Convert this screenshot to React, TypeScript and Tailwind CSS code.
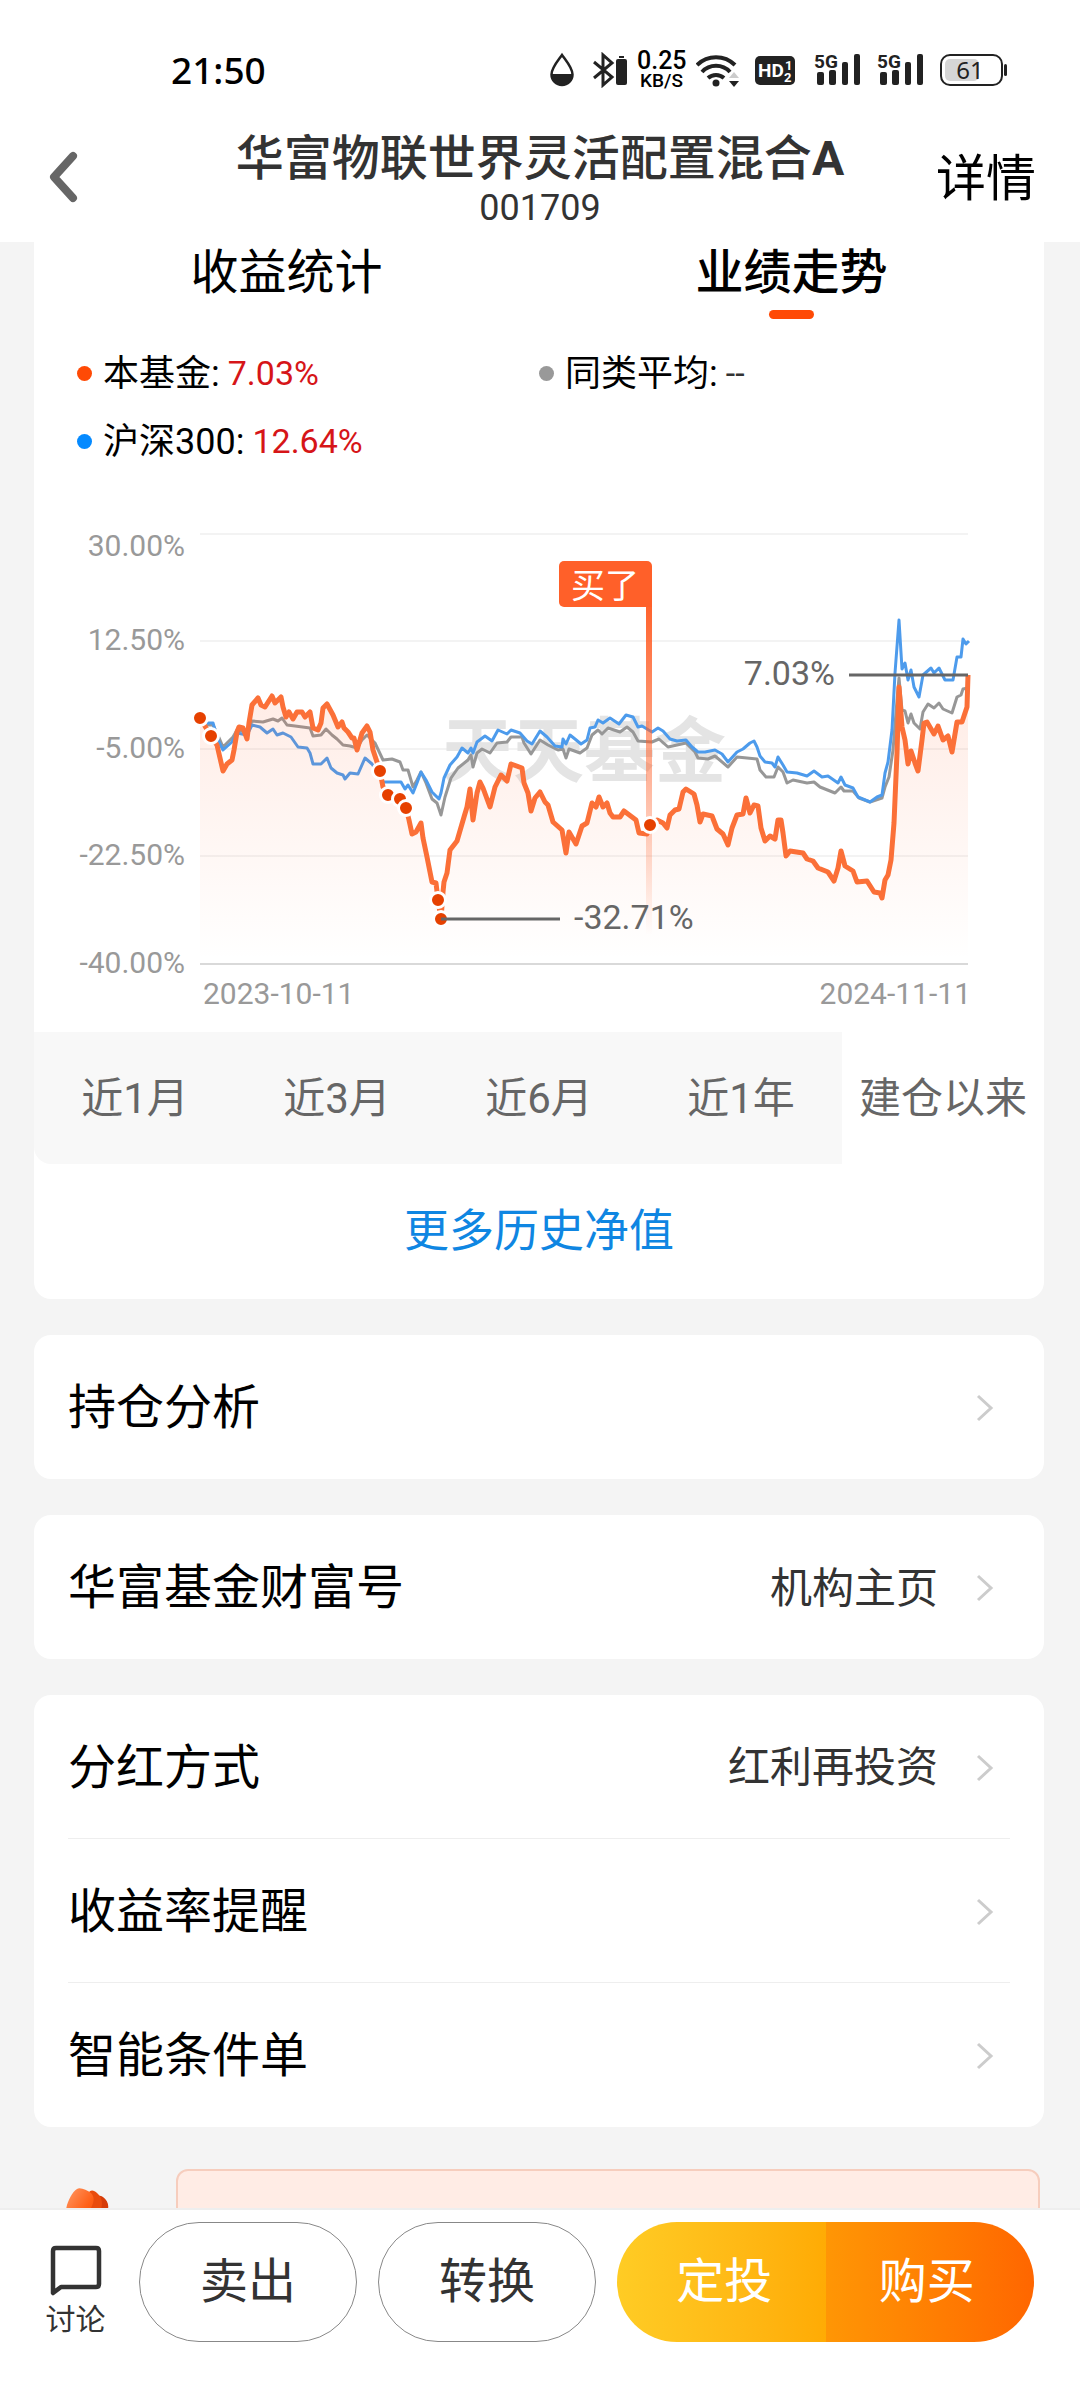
import { useState } from "react";

const fundLine =
  "200,718 211,736 217,745 223,771 227,764 232,760 234,750 237,732 239,727 243,728 247,739 249,723 252,705 258,698 261,705 265,707 272,696 275,703 281,697 283,707 286,717 289,712 293,719 297,712 302,712 305,717 310,712 313,728 318,730 321,723 323,708 327,704 333,715 338,727 342,722 344,728 348,732 352,738 354,738 357,750 362,733 367,726 370,732 373,750 380,771 383,787 388,795 400,799 406,808 409,820 412,834 416,832 421,823 423,838 427,857 432,882 436,883 438,900 441,919 443,892 444,882 447,873 450,850 457,841 464,817 467,807 470,789 473,820 477,793 480,782 483,788 490,807 495,787 501,775 507,781 511,764 522,768 524,783 528,793 531,811 535,798 540,792 545,802 548,805 553,822 562,830 566,853 569,832 576,844 582,826 587,823 592,803 596,807 599,797 603,807 607,803 610,813 613,817 620,817 624,811 632,817 636,820 639,833 647,834 650,825 657,820 663,823 667,828 670,815 675,810 679,809 683,792 686,789 694,794 697,805 700,822 703,814 712,816 717,829 723,834 728,845 732,828 737,815 743,814 746,798 750,813 754,805 758,806 761,828 765,841 770,836 775,839 778,820 781,820 783,833 786,856 790,851 803,853 807,859 813,861 818,868 828,872 834,881 838,868 841,851 845,866 853,871 857,882 867,881 874,892 880,893 882,898 885,880 888,875 891,860 894,823 897,753 899,687 902,727 905,740 908,764 911,751 915,763 918,771 922,740 924,723 927,722 934,734 938,726 943,740 948,736 952,752 957,722 962,722 967,707 968,675";

const indexLine =
  "200,718 206,723 213,723 218,740 223,750 232,742 237,733 247,735 252,725 260,727 267,733 273,729 277,735 283,733 291,737 298,747 307,748 310,753 313,764 321,764 327,758 331,768 337,773 343,775 345,779 350,773 358,774 365,758 372,764 378,773 383,782 401,782 405,789 408,785 413,793 417,783 421,772 426,780 432,792 439,799 441,793 444,778 450,765 457,757 462,748 468,753 471,748 473,753 477,742 485,736 492,741 498,730 507,734 511,730 520,733 527,741 532,744 540,731 547,737 555,746 562,747 563,739 566,744 570,735 575,739 581,744 587,740 590,728 595,727 598,720 603,723 610,718 619,724 626,715 633,717 638,727 642,726 652,732 658,728 663,731 670,739 677,741 686,740 692,747 698,752 705,752 715,750 722,754 728,762 737,752 743,749 750,743 754,741 757,747 760,756 765,762 772,763 775,767 778,757 783,765 787,772 797,773 807,776 814,771 822,777 828,776 838,783 841,777 845,785 853,788 858,797 870,802 877,797 882,795 885,773 888,762 892,730 895,673 899,620 902,669 905,663 908,680 911,670 914,687 919,697 923,675 931,668 934,673 939,668 945,680 953,680 957,657 961,657 963,639 966,644 969,641";

const averageLine =
  "200,718 206,725 213,725 220,740 223,747 228,742 233,737 237,730 247,732 252,721 263,722 273,719 278,721 282,718 287,725 295,726 310,728 313,736 321,735 326,729 332,735 337,739 343,745 350,746 357,748 362,740 367,735 375,743 383,760 392,759 400,762 403,770 408,770 413,787 417,780 421,772 426,783 432,799 437,803 441,815 445,797 451,778 458,768 468,760 471,755 473,767 477,753 482,749 490,753 497,743 507,742 511,737 522,737 524,743 531,754 540,740 548,745 558,750 563,749 566,758 569,749 580,753 587,748 592,735 598,730 602,734 608,728 620,732 627,727 633,732 638,741 652,742 659,739 668,747 686,743 695,752 698,758 708,759 715,756 728,767 737,757 757,759 760,770 766,777 774,777 778,767 783,772 787,783 793,780 807,783 814,782 820,787 835,793 841,787 844,791 853,791 859,798 870,802 882,798 885,787 889,777 893,750 897,700 899,678 902,710 905,711 908,723 911,714 914,723 920,729 923,712 928,704 934,708 939,703 943,709 952,713 957,697 961,695 963,689 968,688";

const buyPoints = [
  [200, 718],
  [211, 736],
  [380, 771],
  [388, 795],
  [400, 799],
  [406, 808],
  [438, 900],
  [441, 919],
  [650, 825],
];

const axis = [
  { label: "30.00%", line: 534, text: 556 },
  { label: "12.50%", line: 641, text: 650 },
  { label: "-5.00%", line: 749, text: 758 },
  { label: "-22.50%", line: 856, text: 865 },
  { label: "-40.00%", line: 964, text: 973 },
];

const periods = ["近1月", "近3月", "近6月", "近1年", "建仓以来"];

function Signal() {
  return (
    <svg width="53" height="48" viewBox="0 -6 53 48" fill="#222">
      <text x="0" y="16" fontSize="19" fontWeight="700">5G</text>
      <rect x="3" y="20" width="7" height="13" rx="2" />
      <rect x="15" y="18" width="7" height="15" rx="2" />
      <rect x="28" y="10" width="6" height="23" rx="2" />
      <rect x="40" y="2" width="6" height="31" rx="2" />
    </svg>
  );
}

function StatusBar() {
  return (
    <div className="flex h-[112px] items-center justify-between pt-7 pr-[73px] pl-[171px]">
      <span className="font-['Noto_Sans'] text-[37px] leading-[44px] font-medium text-black">21:50</span>
      <div className="flex items-center gap-[10px]">
        <svg width="33" height="36" viewBox="0 0 33 36">
          <path d="M12 3C7 10 1.500 16 1.500 22.500a10.500 10.500 0 0 0 21 0C22.500 16 17 10 12 3Z" fill="none" stroke="#222" strokeWidth="2.500" />
          <path d="M1.500 22h21a10.500 11 0 0 1-21 0Z" fill="#222" />
        </svg>
        <svg width="34" height="36" viewBox="0 0 34 36">
          <path d="M1 10l18 15-9 8V3l9 8L1 26" fill="none" stroke="#222" strokeWidth="3" />
          <rect x="23" y="7" width="11" height="26" rx="2" fill="#222" />
          <rect x="26" y="4" width="5" height="2" fill="#222" />
        </svg>
        <div className="w-[49px] text-center font-medium text-black">
          <p className="text-[25px] leading-[22px]">0.25</p>
          <p className="text-[19px] leading-[18px]">KB/S</p>
        </div>
        <svg width="49" height="36" viewBox="0 0 49 36">
          <g fill="none" stroke="#222" strokeWidth="4">
            <path d="M1 13a27 27 0 0 1 38 0" />
            <path d="M6 20a19 19 0 0 1 28 0" />
            <path d="M12 26a12 12 0 0 1 16 0" />
          </g>
          <circle cx="20" cy="31" r="3.500" fill="#222" />
          <path d="M33 26l5-6 5 6Z" fill="#ccc" />
          <path d="M33 29h10l-5 6Z" fill="#222" />
        </svg>
        <svg width="49" height="36" viewBox="0 0 49 36">
          <rect y="4" width="40" height="29" rx="5" fill="#222" />
          <g fill="#fff" fontWeight="700">
            <text x="3" y="25" fontSize="19">HD</text>
            <text x="30" y="18" fontSize="13">1</text>
            <text x="29" y="30" fontSize="13">2</text>
          </g>
        </svg>
        <Signal />
        <Signal />
        <svg width="67" height="36" viewBox="0 0 67 36">
          <rect x="1" y="3" width="61" height="30" rx="9" fill="#fff" stroke="#222" strokeWidth="2" />
          <rect x="5" y="7" width="34" height="22" rx="5" fill="#d6d6d6" />
          <rect x="64" y="12" width="3" height="12" rx="1.500" fill="#222" />
          <text x="30" y="27" fontSize="24" textAnchor="middle" fill="#222" fontFamily="Noto Sans">61</text>
        </svg>
      </div>
    </div>
  );
}

function Header() {
  return (
    <header className="shrink-0 bg-white">
      <StatusBar />
      <div className="grid h-[130px] grid-cols-[1fr_auto_1fr] items-center px-11">
        <button aria-label="返回" className="justify-self-start pl-1">
          <svg width="32" height="54" viewBox="0 0 32 54" fill="none" stroke="#666" strokeWidth="8" strokeLinecap="round" strokeLinejoin="round">
            <path d="M25 6L6 27l19 21" />
          </svg>
        </button>
        <div className="pt-[6px] text-center text-[#333]">
          <h1 className="text-[48px] leading-[56px] font-medium">
            华富物联世界灵活配置混合<b className="font-bold">A</b>
          </h1>
          <p className="text-[36px] leading-[42px]">001709</p>
        </div>
        <a href="#detail" className="justify-self-end pt-1 text-[50px] leading-[58px] text-black">详情</a>
      </div>
    </header>
  );
}

type LegendProps = { color: string; label: string; value: string; valueClass: string };

function Legend({ color, label, value, valueClass }: LegendProps) {
  return (
    <p className="flex h-[68px] items-center text-[36px] text-black">
      <span className={`mr-[11px] size-[15px] rounded-full ${color}`} />
      <span className="pt-[2px]">{label}:</span>
      <span className={`ml-2 pt-px text-[34px] ${valueClass}`}>{value}</span>
    </p>
  );
}

function TrendChart() {
  return (
    <svg viewBox="34 475 1010 557" className="block w-full" role="img" aria-label="业绩走势">
      <defs>
        <linearGradient id="area" gradientUnits="userSpaceOnUse" x1="0" y1="690" x2="0" y2="960">
          <stop offset="0" stopColor="#ff6029" stopOpacity="0.12" />
          <stop offset="1" stopColor="#ff6029" stopOpacity="0" />
        </linearGradient>
        <linearGradient id="pole" gradientUnits="userSpaceOnUse" x1="0" y1="600" x2="0" y2="935">
          <stop offset="0" stopColor="#ff6029" />
          <stop offset="1" stopColor="#ff6029" stopOpacity="0" />
        </linearGradient>
      </defs>

      {axis.map((row, i) => (
        <g key={row.label}>
          <line x1="200" x2="968" y1={row.line} y2={row.line} stroke={i === 4 ? "#d9d9d9" : "#efefef"} strokeWidth={i === 4 ? 2 : 1.5} />
          <text x="185" y={row.text} textAnchor="end" fontSize="30" fill="#999">{row.label}</text>
        </g>
      ))}

      <text x="442" y="776" fontSize="71" fontWeight="700" fill="#e4e4e4">天天基金</text>

      <g fill="none" strokeWidth="3" strokeLinejoin="round">
        <polyline points={averageLine} stroke="#979797" />
        <polyline points={indexLine} stroke="#4d9bec" />
      </g>
      <polygon points={`200,964 ${fundLine} 968,964`} fill="url(#area)" />
      <polyline points={fundLine} fill="none" stroke="#fb7038" strokeWidth="5" strokeLinejoin="round" />

      <rect x="646" y="600" width="6" height="335" fill="url(#pole)" />
      <path d="M564 561h83a5 5 0 0 1 5 5v41h-88a5 5 0 0 1-5-5v-36a5 5 0 0 1 5-5Z" fill="#ff6029" />
      <text x="605" y="598" textAnchor="middle" fontSize="34" fill="#fff">买了</text>

      {buyPoints.map(([x, y]) => (
        <circle key={`${x}-${y}`} cx={x} cy={y} r="7.500" fill="#e64100" stroke="#fff" strokeWidth="3" />
      ))}

      <g stroke="#666" strokeWidth="3">
        <line x1="441" x2="560" y1="919" y2="919" />
        <line x1="849" x2="968" y1="675" y2="675" />
      </g>
      <g fontSize="34" fill="#666">
        <text x="574" y="929">-32.71%</text>
        <text x="835" y="685" textAnchor="end">7.03%</text>
      </g>
      <g fontSize="30" fill="#999">
        <text x="203" y="1004">2023-10-11</text>
        <text x="971" y="1004" textAnchor="end">2024-11-11</text>
      </g>
    </svg>
  );
}

function Performance() {
  const [period, setPeriod] = useState("建仓以来");

  return (
    <section className="rounded-b-[17px] bg-white">
      <div className="grid grid-cols-2 text-[48px] leading-[62px] text-black">
        <button>收益统计</button>
        <button className="font-medium">业绩走势</button>
        <span className="col-start-2 mt-[6px] h-[9px] w-[45px] justify-self-center rounded-full bg-[#ff4a05]" />
      </div>

      <div className="mt-5 grid grid-cols-[462px_1fr] pl-[43px]">
        <Legend color="bg-[#ff4a05]" label="本基金" value="7.03%" valueClass="text-[#d61518]" />
        <Legend color="bg-[#999]" label="同类平均" value="--" valueClass="text-[#333]" />
        <Legend color="bg-[#058aff]" label="沪深300" value="12.64%" valueClass="text-[#d61518]" />
      </div>

      <TrendChart />

      <div className="grid h-[132px] grid-cols-5 overflow-hidden rounded-b-[17px] text-[42px] text-[#666]">
        {periods.map((name) => (
          <button key={name} onClick={() => setPeriod(name)} className={name === period ? "bg-white" : "bg-[#f8f8f8]"}>
            {name}
          </button>
        ))}
      </div>

      <a href="#history" className="flex h-[135px] items-center justify-center text-[45px] text-[#0f86e2]">
        更多历史净值
      </a>
    </section>
  );
}

function Row({ title, value }: { title: string; value?: string }) {
  return (
    <a href="#row" className="flex h-[144px] items-center pt-[2px] pr-4 text-[48px] text-black">
      <span className="grow">{title}</span>
      {value && <span className="text-[42px] text-[#333]">{value}</span>}
      <svg className="ml-[38px]" width="18" height="30" viewBox="0 0 18 30" fill="none" stroke="#ccc" strokeWidth="3">
        <path d="M2 3l13 12L2 27" />
      </svg>
    </a>
  );
}

function Flower() {
  return (
    <svg className="mt-[19px] w-[110px]" height="40" viewBox="0 0 110 40">
      <defs>
        <linearGradient id="petal" x1="0" y1="0" x2="1" y2="1">
          <stop offset="0" stopColor="#ff9a66" />
          <stop offset="0.600" stopColor="#ff6018" />
          <stop offset="1" stopColor="#e8480a" />
        </linearGradient>
      </defs>
      <path d="M28 12c2-5 6-5 9-3 4 3 6 7 5 12v19H28Z" fill="#d63c08" />
      <path d="M22 6c2-5 6-4 9-1 5 4 6 9 4 17v18H20Z" fill="#e94b0d" />
      <path d="M0 22C1 14 6 4 11 1c3-2 10 1 14 4 4 4 3 9 0 15-3 5-4 12-5 20H2Z" fill="url(#petal)" />
    </svg>
  );
}

function BottomBar() {
  return (
    <footer className="flex h-[192px] shrink-0 items-start border-t-2 border-[#eee] bg-white pt-3 pr-[46px] text-[48px] text-[#333]">
      <button className="flex w-[139px] flex-col items-center gap-[3px] pt-[22px] pl-3 text-[30px] leading-[38px]">
        <svg width="54" height="54" viewBox="0 0 54 54" fill="none" stroke="#333" strokeWidth="4.500" strokeLinejoin="round">
          <path d="M4 49V7q0-3 3-3h40q3 0 3 3v33q0 3-3 3H12Z" />
        </svg>
        讨论
      </button>
      <div className="flex h-[120px] grow gap-[21px]">
        <button className="w-[218px] grow rounded-full border border-[#888]">卖出</button>
        <button className="w-[218px] grow rounded-full border border-[#888]">转换</button>
        <div className="grid w-[417px] grow grid-cols-2 overflow-hidden rounded-full text-white">
          <button className="bg-linear-to-r from-[#ffcc24] to-[#ffab04] pl-[6px]">定投</button>
          <button className="bg-linear-to-r from-[#ff9605] to-[#ff6600] pr-[6px]">购买</button>
        </div>
      </div>
    </footer>
  );
}

export default function App() {
  return (
    <div className="flex h-screen flex-col bg-[#f4f4f4] font-['Roboto','Noto_Sans_CJK_SC',sans-serif]" lang="zh-CN">
      <Header />
      <main className="min-h-0 grow overflow-y-auto [scrollbar-width:none]">
        <div className="flex flex-col gap-9 pr-9 pl-[34px]">
          <Performance />
          <section className="rounded-[17px] bg-white px-[34px]">
            <Row title="持仓分析" />
          </section>
          <section className="rounded-[17px] bg-white px-[34px]">
            <Row title="华富基金财富号" value="机构主页" />
          </section>
          <section className="divide-y divide-[#eee] rounded-[17px] bg-white px-[34px]">
            <Row title="分红方式" value="红利再投资" />
            <Row title="收益率提醒" />
            <Row title="智能条件单" />
          </section>
        </div>
        <div className="mt-[42px] flex items-start pr-10 pl-[66px]">
          <Flower />
          <div className="h-[100px] grow rounded-[12px] border-2 border-[#f6cdbd] bg-[#ffece5]" />
        </div>
      </main>
      <BottomBar />
    </div>
  );
}
